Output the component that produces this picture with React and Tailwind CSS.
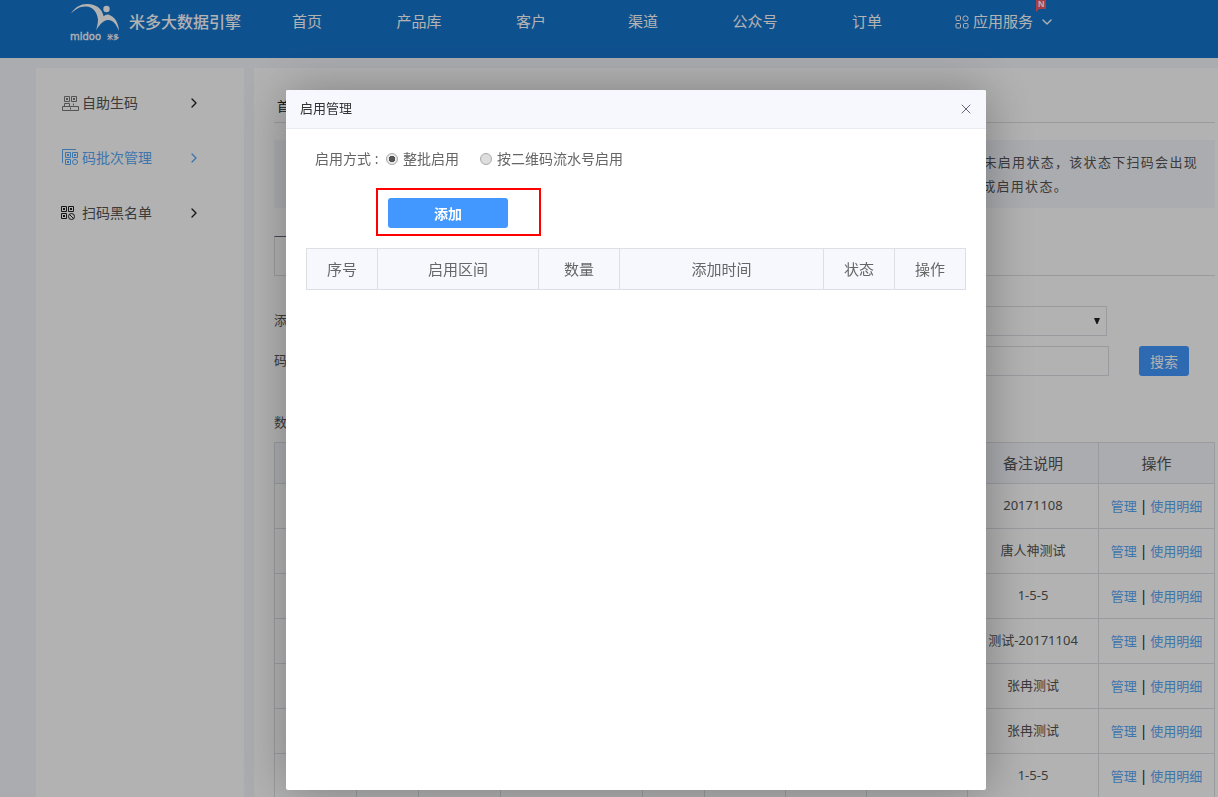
import { ChevronDown, ChevronRight, X } from "lucide-react";

const navItems = ["首页", "产品库", "客户", "渠道", "公众号", "订单"];

const rows = [
  { id: 1, remark: "20171108" },
  { id: 2, remark: "唐人神测试" },
  { id: 3, remark: "1-5-5" },
  { id: 4, remark: "测试-20171104" },
  { id: 5, remark: "张冉测试" },
  { id: 6, remark: "张冉测试" },
  { id: 7, remark: "1-5-5" },
];

function Logo() {
  return (
    <svg width="52" height="44" viewBox="69 0 52 44" fill="#fff" className="shrink-0">
      <path d="M71 13.4C75 7 81 3.6 88 4c8 .4 14 4.500 15.600 12.200C105.500 14.700 107.500 14.200 109.500 15c5.500 2 9 8 9.500 16C116 23.500 112.500 19.800 108 20c-5 .4-8.500 4.500-12 10.500C97.200 26 98 23.500 98 19.500 97 11 92 7 86.500 6.500 80.500 6 75.500 9 71 13.400z" />
      <circle cx="106.500" cy="9" r="3.200" />
      <text x="70" y="40" fontSize="10" stroke="#fff" strokeWidth="0.3" fontFamily="DejaVu Sans, sans-serif">midoo</text>
      <text x="107" y="39" fontSize="6" fontWeight="700" fontFamily="Noto Sans CJK SC, sans-serif">米多</text>
    </svg>
  );
}

function AppsIcon() {
  return (
    <svg width="14" height="14" viewBox="0 0 14 14" fill="none" stroke="#fff">
      <rect x="1" y="1" width="4.500" height="4.500" rx="1" />
      <circle cx="10.500" cy="3.500" r="2.600" />
      <rect x="1" y="8.500" width="4.500" height="4.500" rx="1" />
      <rect x="8.500" y="8.500" width="4.500" height="4.500" rx="1" />
    </svg>
  );
}

function GenerateIcon() {
  return (
    <svg width="20" height="20" viewBox="0 0 20 20" fill="none" stroke="#777">
      <path d="M4.500 3.500h5v5h-5zM11.500 3.500h5v5h-5zM4.500 13v-2.500h5V13M2.500 13.500h16v4h-16z" />
      <path d="M6 6h2M13 6h2M10 15.500h1M13 11.500h1" strokeWidth="2" />
    </svg>
  );
}

function BatchIcon() {
  return (
    <svg width="20" height="20" viewBox="0 0 20 20" fill="none" stroke="#5aa9f7">
      <path d="M16 1.500H2.500V15M5.500 4.500h5v5h-5zM12.500 4.500h5v5h-5zM5.500 11.500h5v5h-5z" />
      <path d="M7 7h2M14 7h2M7 14h2" strokeWidth="2" />
      <circle cx="15" cy="14" r="2.500" />
    </svg>
  );
}

function BlacklistIcon() {
  return (
    <svg width="20" height="20" viewBox="0 0 20 20" fill="none" stroke="#222">
      <path d="M1.500 3.500h5v5h-5zM8.500 3.500h5v5h-5zM1.500 10.500h5v5h-5z" />
      <path d="M3 6h2M10 6h2M3 13h2" strokeWidth="2" />
      <circle cx="11.500" cy="13.500" r="3" />
      <path d="M9.500 11.500l4 4" />
    </svg>
  );
}

const sideItems = [
  { label: "自助生码", Icon: GenerateIcon },
  { label: "码批次管理", Icon: BatchIcon, active: true },
  { label: "扫码黑名单", Icon: BlacklistIcon },
];

function Header() {
  return (
    <header className="flex h-[58px] shrink-0 items-start bg-[#1575cd] pl-[69px] text-white">
      <div className="flex h-[43px] w-[182px] items-center gap-2">
        <Logo />
        <span className="whitespace-nowrap text-[16px] font-medium">米多大数据引擎</span>
      </div>
      <nav className="flex h-[43px] items-center text-[15px]">
        {navItems.map((item) => (
          <a key={item} href="#" className="w-28 text-center">
            {item}
          </a>
        ))}
        <a href="#" className="relative ml-8 flex h-full items-center gap-1 whitespace-nowrap">
          <AppsIcon />
          应用服务
          <ChevronDown size={16} className="ml-0.5" />
          <svg width="10" height="12" viewBox="0 0 10 12" className="absolute right-[9px] top-0" fill="#ee5a67">
            <path d="M0 0h10v9H3L0 12z" />
            <text x="2" y="7" fontSize="9" fontWeight="700" fill="#fff" fontFamily="Liberation Sans, sans-serif">N</text>
          </svg>
        </a>
      </nav>
    </header>
  );
}

function Sidebar() {
  return (
    <aside className="w-[208px] shrink-0 bg-white pt-[7px]">
      {sideItems.map(({ label, Icon, active }) => (
        <a
          key={label}
          href="#"
          className={`flex h-[55px] items-center gap-0.5 pl-6 pr-[42px] text-[14px] ${active ? "text-[#5aa9f7]" : "text-[#555]"}`}
        >
          <Icon />
          <span className="flex-1">{label}</span>
          <ChevronRight size={16} className={active ? "" : "text-[#222]"} />
        </a>
      ))}
    </aside>
  );
}

function BatchTable() {
  return (
    <table className="w-full table-fixed border-collapse text-center text-[13px] text-[#555]">
      <colgroup>
        <col className="w-[82px]" />
        <col className="w-[62px]" />
        <col className="w-[82px]" />
        <col className="w-[142px]" />
        <col className="w-[62px]" />
        <col className="w-[81px]" />
        <col className="w-[81px]" />
        <col className="w-[101px]" />
        <col className="w-[131px]" />
        <col />
      </colgroup>
      <thead>
        <tr className="h-[41px] bg-[#f5f7fd] text-[15px]">
          {[...Array(8)].map((_, i) => (
            <th key={i} className="border border-[#dcdfe4]" />
          ))}
          <th className="border border-[#dcdfe4] font-normal">备注说明</th>
          <th className="border border-[#dcdfe4] font-normal">操作</th>
        </tr>
      </thead>
      <tbody>
        {rows.map((row) => (
          <tr key={row.id} className="h-[45px]">
            {[...Array(8)].map((_, i) => (
              <td key={i} className="border border-[#dcdfe4]" />
            ))}
            <td className="whitespace-nowrap border border-[#dcdfe4]">{row.remark}</td>
            <td className="whitespace-nowrap border border-[#dcdfe4]">
              <a href="#" className="text-[#5aa9f7]">管理</a>
              <span className="px-[3px] text-[14px] text-[#222]">|</span>
              <a href="#" className="text-[#5aa9f7]">使用明细</a>
            </td>
          </tr>
        ))}
      </tbody>
    </table>
  );
}

function BatchPage() {
  return (
    <main className="min-w-0 flex-1 bg-white pl-5 pr-[3px] text-[13px] text-[#555]">
      <div className="flex h-[55px] items-end border-b border-[#dcdfe4] pb-1.5 pl-[3px] text-[#222]">首页</div>

      <p className="mt-[17px] h-[68px] overflow-hidden whitespace-nowrap bg-[#f5f7fd] py-2.5 pr-[17px] text-right leading-6 tracking-widest">
        未启用状态，该状态下扫码会出现
        <br />
        <span className="mr-[130px]">成启用状态。</span>
      </p>

      <div className="mt-7 flex h-10 border-b border-[#dcdfe4]">
        <button type="button" aria-label="码批次" className="w-28 border-l border-t border-l-[#dcdfe4] border-t-[#667]" />
      </div>

      <form className="mt-[30px] space-y-2.5">
        <div className="flex h-[30px] items-center pr-[108px]">
          <label htmlFor="addTime" className="w-[72px]">添加</label>
          <div className="relative h-full flex-1">
            <select id="addTime" className="h-full w-full appearance-none border border-[#dcdfe4] bg-white" />
            <svg width="6" height="6" viewBox="0 0 6 6" className="absolute right-[7px] top-3" fill="#222">
              <path d="M0 0h6L3.500 6h-1z" />
            </svg>
          </div>
        </div>
        <div className="flex h-[30px] items-center pr-[26px]">
          <label htmlFor="codeNo" className="w-[72px]">码</label>
          <input id="codeNo" className="h-full flex-1 border border-[#dcdfe4] bg-white" />
          <button type="button" className="ml-[30px] h-full w-[50px] rounded-[3px] bg-[#4398ff] text-[14px] text-white">
            搜索
          </button>
        </div>
      </form>

      <div className="mb-2.5 mt-9 h-5 leading-5">数</div>
      <BatchTable />
    </main>
  );
}

function EnableDialog() {
  return (
    <div className="fixed inset-0 flex items-start justify-center overflow-hidden bg-black/30 pl-[54px] pt-[90px]">
      <div
        role="dialog"
        aria-labelledby="dialogTitle"
        className="h-[700px] w-[700px] rounded-[2px] bg-white shadow-[1px_1px_50px_rgba(0,0,0,0.3)]"
      >
        <div className="flex h-[39px] items-center justify-between rounded-t-[2px] border-b border-[#e9ecf0] bg-[#f7f8fd] pl-3.5 pr-3">
          <h2 id="dialogTitle" className="text-[13px] text-[#333]">启用管理</h2>
          <button type="button" aria-label="关闭" className="text-[#667]">
            <X size={16} strokeWidth={1.5} />
          </button>
        </div>

        <div className="px-5 pt-5">
          <div className="flex h-5 items-center pl-[9px] text-[14px] leading-5 text-[#666]">
            <span className="w-[71px] whitespace-nowrap">启用方式 :</span>
            <input
              id="whole"
              name="mode"
              type="radio"
              defaultChecked
              className="h-3 w-3 appearance-none rounded-full border border-[#aaa] bg-[#e8e8e8] checked:bg-[radial-gradient(circle,#555_0_3px,#e8e8e8_3px)]"
            />
            <label htmlFor="whole" className="ml-[5px] mr-[21px]">整批启用</label>
            <input
              id="serial"
              name="mode"
              type="radio"
              className="h-3 w-3 appearance-none rounded-full border border-[#aaa] bg-[#dedede] checked:bg-[radial-gradient(circle,#555_0_3px,#e8e8e8_3px)]"
            />
            <label htmlFor="serial" className="ml-[5px]">按二维码流水号启用</label>
          </div>

          <div className="ml-[70px] mt-[19px] h-12 w-[165px] border-2 border-[#f00] px-2.5 py-2">
            <button type="button" className="h-[30px] w-[120px] rounded-[3px] bg-[#4398ff] text-[14px] font-bold text-white">
              添加
            </button>
          </div>

          <table className="mt-3 w-full table-fixed border-collapse text-[15px] text-[#666]">
            <thead>
              <tr className="h-[41px] bg-[#f7f8fd]">
                <th className="w-[71px] border border-[#dcdfe4] font-normal">序号</th>
                <th className="w-[161px] border border-[#dcdfe4] font-normal">启用区间</th>
                <th className="w-[81px] border border-[#dcdfe4] font-normal">数量</th>
                <th className="border border-[#dcdfe4] font-normal">添加时间</th>
                <th className="w-[71px] border border-[#dcdfe4] font-normal">状态</th>
                <th className="w-[71px] border border-[#dcdfe4] font-normal">操作</th>
              </tr>
            </thead>
          </table>
        </div>
      </div>
    </div>
  );
}

export default function App() {
  return (
    <div className="flex h-screen flex-col overflow-hidden bg-[#f5f7fd] font-['Noto_Sans','Noto_Sans_CJK_SC',sans-serif]">
      <Header />
      <div className="flex min-h-0 flex-1 gap-2.5 pl-9 pt-2.5">
        <Sidebar />
        <BatchPage />
      </div>
      <EnableDialog />
    </div>
  );
}
